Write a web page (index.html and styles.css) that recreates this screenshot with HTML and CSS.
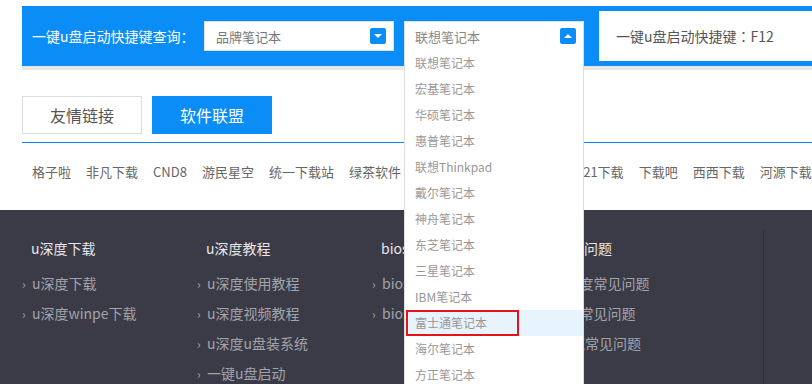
FILE: index.html
```html
<!DOCTYPE html>
<html lang="zh-CN">
<head>
  <meta charset="UTF-8" />
  <meta name="viewport" content="width=device-width, initial-scale=1.0"/>
  <title>一键u盘启动快捷键查询</title>
  <link rel="stylesheet" href="styles.css">
</head>
<body>
  <div class="wrap">
    <div class="search">
      <span class="search-label">一键u盘启动快捷键查询<span class="colon">：</span></span>

      <div class="select select-brand">
        <span>品牌笔记本</span>
        <span class="arrow"></span>
      </div>

      <div class="select select-model">
        <span>联想笔记本</span>
        <span class="arrow up"></span>
        <ul class="options">
          <li>联想笔记本</li>
          <li>宏基笔记本</li>
          <li>华硕笔记本</li>
          <li>惠普笔记本</li>
          <li>联想Thinkpad</li>
          <li>戴尔笔记本</li>
          <li>神舟笔记本</li>
          <li>东芝笔记本</li>
          <li>三星笔记本</li>
          <li>IBM笔记本</li>
          <li class="hover">富士通笔记本<span class="mark"></span></li>
          <li>海尔笔记本</li>
          <li>方正笔记本</li>
          <li>清华同方笔记本</li>
        </ul>
      </div>

      <div class="result">一键u盘启动快捷键<span class="colon">：</span>F12</div>
    </div>
    <div class="search-shadow"></div>

    <div class="tabs">
      <a class="tab">友情链接</a>
      <a class="tab active">软件联盟</a>
    </div>

    <div class="links">
      <a>格子啦</a>
      <a>非凡下载</a>
      <a>CND8</a>
      <a>游民星空</a>
      <a>统一下载站</a>
      <a>绿茶软件</a>
      <a>华军软件园</a>
      <a>多特软件站</a>
      <a>121下载</a>
      <a>下载吧</a>
      <a>西西下载</a>
      <a>河源下载</a>
    </div>
  </div>

  <div class="footer">
    <div class="fcol">
      <h3>u深度下载</h3>
      <ul>
        <li><i>›</i>u深度下载</li>
        <li><i>›</i>u深度winpe下载</li>
      </ul>
    </div>
    <div class="fcol">
      <h3>u深度教程</h3>
      <ul>
        <li><i>›</i>u深度使用教程</li>
        <li><i>›</i>u深度视频教程</li>
        <li><i>›</i>u深度u盘装系统</li>
        <li><i>›</i>一键u盘启动</li>
      </ul>
    </div>
    <div class="fcol">
      <h3>bios设置</h3>
      <ul>
        <li><i>›</i>bios设置教程</li>
        <li><i>›</i>bios设置u盘启动</li>
      </ul>
    </div>
    <div class="fcol">
      <h3>常见问题</h3>
      <ul>
        <li><i>›</i>u深度常见问题</li>
        <li><i>›</i>u盘常见问题</li>
        <li><i>›</i>系统常见问题</li>
      </ul>
    </div>
    <div class="fdivider"></div>
  </div>
</body>
</html>
```

FILE: styles.css
```css
* {
  box-sizing: border-box;
}
body {
  margin: 0;
  width: 812px;
  height: 384px;
  overflow: hidden;
  background: #fff;
  color: #555;
  font-family: "Noto Sans CJK SC", "Liberation Sans", sans-serif;
}
ul {
  list-style: none;
  margin: 0;
  padding: 0;
}
.wrap {
  margin-left: 22px;
  width: 1180px;
}
.colon {
  font-family: "Noto Sans CJK TC", sans-serif;
}

/* search bar */
.search {
  margin-top: 6px;
  height: 60px;
  background: #0b8df8;
  display: flex;
  align-items: center;
  padding-left: 10px;
}
.search-label {
  width: 172px;
  color: #fff;
  font-size: 14px;
  white-space: nowrap;
}
.select {
  position: relative;
  height: 30px;
  background: #fff;
  border: 1px solid #ddd;
  display: flex;
  align-items: center;
  justify-content: space-between;
  padding: 0 7px 0 11px;
  font-size: 13px;
  color: #777;
}
.select-brand {
  width: 190px;
}
.select-model {
  width: 180px;
  margin-left: 10px;
  padding-left: 10px;
  color: #888;
  z-index: 5;
}
.arrow {
  width: 16px;
  height: 16px;
  border-radius: 2px;
  background: #0b8df8;
  display: flex;
  align-items: center;
  justify-content: center;
}
.arrow::after {
  content: "";
  border-left: 4px solid transparent;
  border-right: 4px solid transparent;
  border-top: 4px solid #fff;
}
.arrow.up::after {
  border-top: 0;
  border-bottom: 4px solid #fff;
}
.options {
  position: absolute;
  left: -1px;
  top: 28px;
  width: 180px;
  background: #fff;
  border: 1px solid #ddd;
  border-top: 0;
}
.options li {
  position: relative;
  height: 26px;
  line-height: 26px;
  padding-left: 10px;
  font-size: 12px;
  color: #9a9795;
}
.options li.hover {
  background: #e8f4fd;
}
.mark {
  position: absolute;
  left: 1px;
  top: 0;
  width: 113px;
  height: 26px;
  border: 2px solid #e5141c;
}
.result {
  flex: 1;
  height: 50px;
  margin-left: 15px;
  background: #fff;
  padding-left: 17px;
  display: flex;
  align-items: center;
  font-size: 14px;
  color: #555;
}
.search-shadow {
  height: 4px;
  background: #e7e7e7;
}

/* tabs */
.tabs {
  display: flex;
  gap: 10px;
  margin-top: 26px;
  padding-bottom: 8px;
  border-bottom: 1px solid #0b8df8;
}
.tab {
  width: 120px;
  height: 38px;
  line-height: 36px;
  text-align: center;
  font-size: 16px;
  color: #555;
  border: 1px solid #ddd;
}
.tab.active {
  background: #0b8df8;
  border-color: #0b8df8;
  color: #fff;
}
.links {
  display: flex;
  gap: 15px;
  height: 67px;
  padding: 19px 0 0 10px;
  font-size: 13px;
  line-height: 20px;
  color: #666;
  white-space: nowrap;
}

/* footer */
.footer {
  height: 200px;
  background: #3a3b47;
  display: flex;
  padding: 28px 0 0 22px;
}
.fcol {
  width: 175px;
  flex-shrink: 0;
}
.fcol h3 {
  margin: 0 0 10px 9px;
  font-size: 14px;
  font-weight: normal;
  line-height: 20px;
  color: #e6e6e8;
  white-space: nowrap;
}
.fcol li {
  display: flex;
  align-items: center;
  height: 30px;
  font-size: 14px;
  color: #a2a3aa;
  white-space: nowrap;
}
.fcol li i {
  width: 10px;
  font-style: normal;
  font-size: 12px;
}
.fdivider {
  margin: -8px 0 0 41px;
  width: 1px;
  background: #2d2e38;
}
```
